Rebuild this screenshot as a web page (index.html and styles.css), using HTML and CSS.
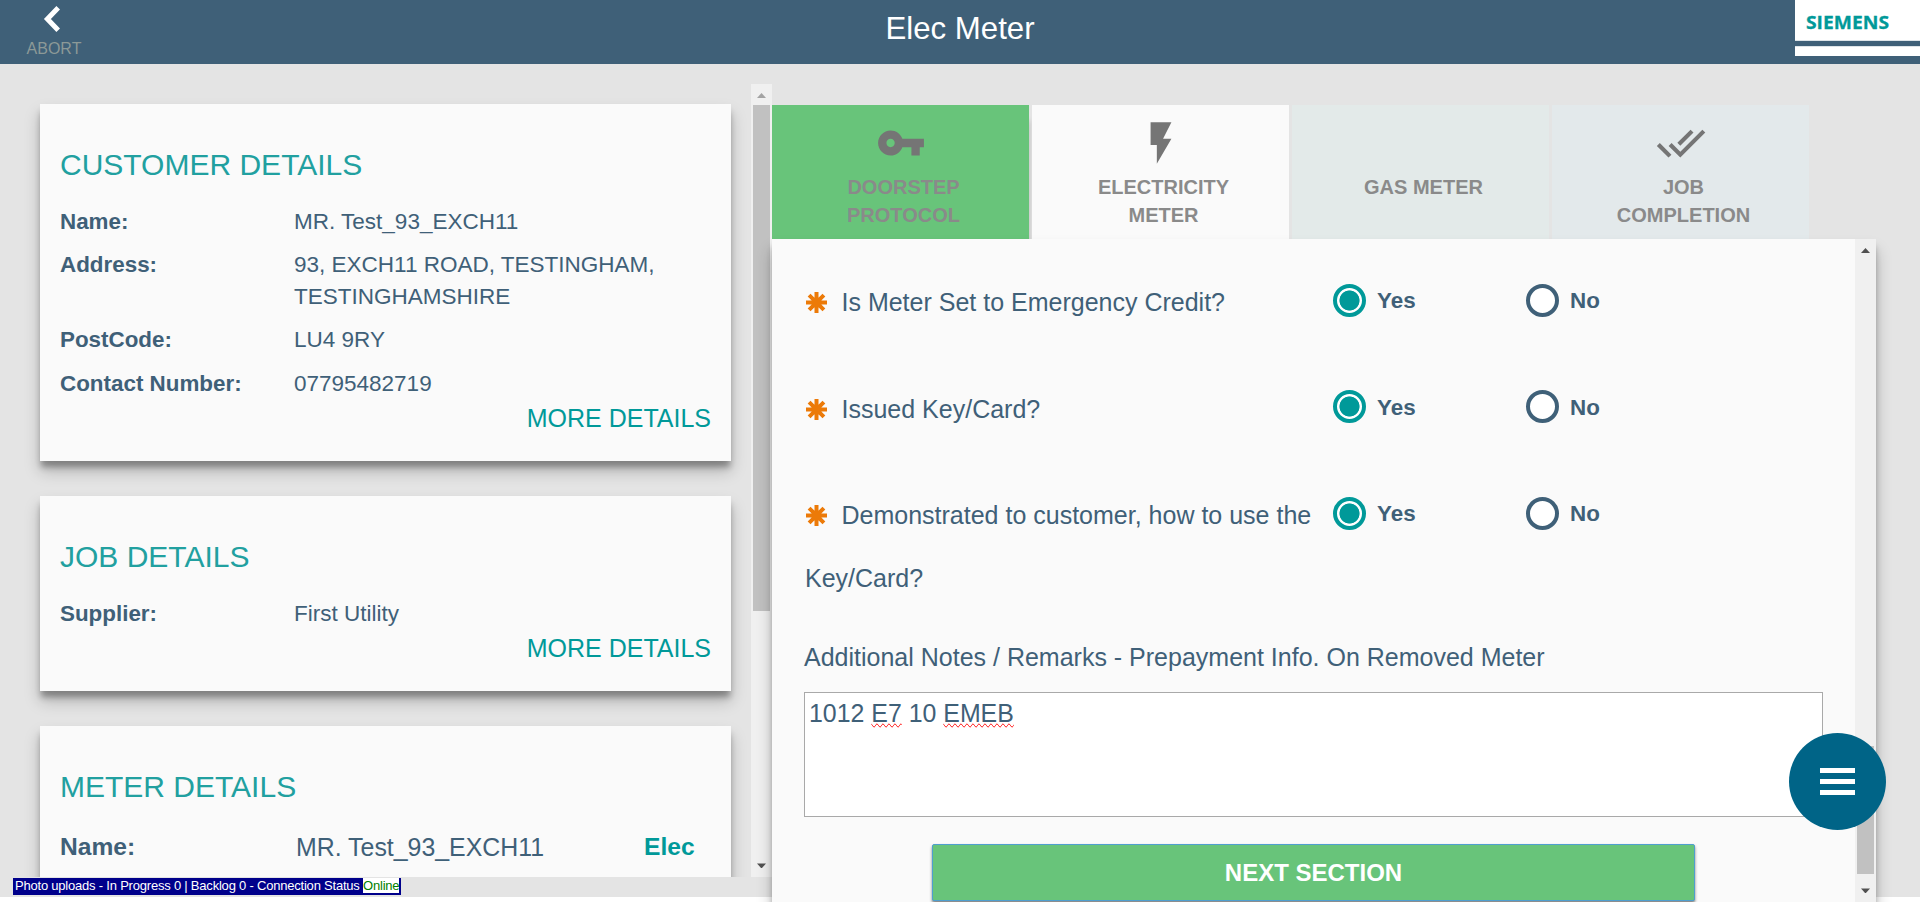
FILE: index.html
```html
<!DOCTYPE html>
<html lang="en">
<head>
<meta charset="utf-8">
<title>Elec Meter</title>
<link rel="stylesheet" href="styles.css">
</head>
<body>
<header class="topbar">
  <div class="abort">
    <svg class="abort-icon" viewBox="0 0 18 28" width="18" height="28"><path d="M15.2 2.8 4.4 14l10.8 11.2" fill="none" stroke="#fff" stroke-width="5"/></svg>
    <span class="abort-label">ABORT</span>
  </div>
  <h1 class="page-title">Elec Meter</h1>
  <div class="brand">
    <svg class="brand-name" width="113" height="41"><text x="0" y="29" textLength="83" lengthAdjust="spacingAndGlyphs">SIEMENS</text></svg>
    <div class="brand-line"></div>
  </div>
</header>

<main class="content">
  <section class="sidebar">
    <div class="cards">
      <article class="card card-customer">
        <h2 class="card-title">CUSTOMER DETAILS</h2>
        <dl class="details">
          <dt>Name:</dt><dd>MR. Test_93_EXCH11</dd>
          <dt>Address:</dt><dd>93, EXCH11 ROAD, TESTINGHAM, TESTINGHAMSHIRE</dd>
          <dt>PostCode:</dt><dd>LU4 9RY</dd>
          <dt>Contact Number:</dt><dd>07795482719</dd>
        </dl>
        <a class="more">MORE DETAILS</a>
      </article>
      <article class="card card-job">
        <h2 class="card-title">JOB DETAILS</h2>
        <dl class="details">
          <dt>Supplier:</dt><dd>First Utility</dd>
        </dl>
        <a class="more">MORE DETAILS</a>
      </article>
      <article class="card card-meter">
        <h2 class="card-title">METER DETAILS</h2>
        <div class="meter-row"><b>Name:</b><span>MR. Test_93_EXCH11</span><b class="fuel">Elec</b></div>
      </article>
    </div>
    <div class="scrollbar scrollbar-left">
      <div class="arrow arrow-up arrow-dim"></div>
      <div class="thumb"></div>
      <div class="arrow arrow-down"></div>
    </div>
  </section>

  <section class="work">
    <nav class="tabs">
      <div class="tab tab-done">
        <svg class="tab-icon" viewBox="0 0 24 24"><path d="M12.65 10C11.83 7.67 9.61 6 7 6c-3.31 0-6 2.69-6 6s2.69 6 6 6c2.61 0 4.83-1.67 5.65-4H17v4h4v-4h2v-4H12.65zM7 14c-1.1 0-2-.9-2-2s.9-2 2-2 2 .9 2 2-.9 2-2 2z"/></svg>
        <span>DOORSTEP<br>PROTOCOL</span>
      </div>
      <div class="tab tab-current">
        <svg class="tab-icon" viewBox="0 0 24 24"><path d="M7 2v11h3v9l7-12h-4l4-8z"/></svg>
        <span>ELECTRICITY<br>METER</span>
      </div>
      <div class="tab tab-gas">
        <div class="tab-icon"></div>
        <span>GAS METER</span>
      </div>
      <div class="tab tab-job">
        <svg class="tab-icon" viewBox="0 0 24 24"><path d="M18 7l-1.41-1.41-6.34 6.34 1.41 1.41L18 7zm4.24-1.41L11.66 16.17 7.48 12l-1.41 1.41L11.66 19l12-12-1.42-1.41zM.41 13.41L6 19l1.41-1.41L1.83 12 .41 13.41z"/></svg>
        <span>JOB<br>COMPLETION</span>
      </div>
    </nav>
    <div class="panel">
      <form class="form">
        <div class="question">
          <div class="question-text"><svg class="required" viewBox="-10.5 -10.5 21 21"><path d="M0-10.5v21M-10.5 0h21M-7.4-7.4 7.4 7.4M-7.4 7.4 7.4-7.4"/></svg>Is Meter Set to Emergency Credit?</div>
          <label class="option"><i class="radio radio-on"></i>Yes</label>
          <label class="option"><i class="radio"></i>No</label>
        </div>
        <div class="question">
          <div class="question-text"><svg class="required" viewBox="-10.5 -10.5 21 21"><path d="M0-10.5v21M-10.5 0h21M-7.4-7.4 7.4 7.4M-7.4 7.4 7.4-7.4"/></svg>Issued Key/Card?</div>
          <label class="option"><i class="radio radio-on"></i>Yes</label>
          <label class="option"><i class="radio"></i>No</label>
        </div>
        <div class="question question-long">
          <div class="question-text"><svg class="required" viewBox="-10.5 -10.5 21 21"><path d="M0-10.5v21M-10.5 0h21M-7.4-7.4 7.4 7.4M-7.4 7.4 7.4-7.4"/></svg>Demonstrated to customer, how to use the Key/Card?</div>
          <label class="option"><i class="radio radio-on"></i>Yes</label>
          <label class="option"><i class="radio"></i>No</label>
        </div>
        <div class="notes-label">Additional Notes / Remarks - Prepayment Info. On Removed Meter</div>
        <div class="notes">1012 <span class="misspelt">E7</span> 10 <span class="misspelt">EMEB</span></div>
        <div class="next">NEXT SECTION</div>
      </form>
      <div class="scrollbar scrollbar-right">
        <div class="arrow arrow-up"></div>
        <div class="thumb"></div>
        <div class="arrow arrow-down"></div>
      </div>
    </div>
  </section>
</main>

<div class="status">Photo uploads - In Progress 0 | Backlog 0 - Connection Status <span class="online">Online</span></div>
<div class="fab"><i></i><i></i><i></i></div>
</body>
</html>
```

FILE: styles.css
```css
* { box-sizing: border-box; }
html, body { height: 902px; overflow: hidden; }
body {
  margin: 0;
  background: #fff;
  color: #3f6078;
  font-family: "Liberation Sans", Arial, sans-serif;
  position: relative;
}
h1, h2, dl, dd { margin: 0; font-weight: normal; }

.topbar {
  height: 64px;
  background: #3f6078;
  display: grid;
  grid-template-columns: 125px 1fr 125px;
  align-items: start;
}
.abort { width: 108px; padding-top: 5px; display: flex; flex-direction: column; align-items: center; }
.abort-icon { margin-right: 4px; }
.abort-label { font-size: 16px; line-height: 20px; color: #8c9997; margin-top: 6px; }
.page-title { color: #fff; font-size: 31.2px; line-height: 58px; text-align: center; }
.brand { height: 56px; background: #fff; }
.brand-name { display: block; margin-left: 11px; }
.brand-name text { font: 700 18px "Open Sans", "Noto Sans", sans-serif; fill: #009999; stroke: #009999; stroke-width: .3px; }
.brand-line { height: 5px; background: #3f6078; box-shadow: 0 0 1px #3f6078; }

.content { height: 833px; background: #e4e4e4; display: flex; align-items: flex-start; }

.sidebar { width: 772px; height: 793px; margin-top: 20px; display: flex; }
.cards { flex: 1; height: 813px; margin-top: -20px; padding: 40px 20px 0 40px; overflow: hidden; display: flex; flex-direction: column; gap: 35px; }
.card {
  flex: none;
  background: #fafafa;
  padding: 40px 20px 0;
  box-shadow: 0 7px 6px -1px rgba(0,0,0,.3), 0 10px 15px rgba(0,0,0,.22);
}
.card-customer { height: 357px; }
.card-job { height: 195px; }
.card-meter { height: 300px; }
.card-title { font-size: 30px; line-height: 42px; color: #21a0a0; }
.details { display: grid; grid-template-columns: 234px 1fr; row-gap: 11.2px; font-size: 22.4px; line-height: 32px; margin-top: 20px; }
.details dt { font-weight: bold; }
.details dd { font-size: 22.5px; }
.more { display: block; text-align: right; color: #009999; font-size: 25px; line-height: 32px; margin-top: 2.4px; }
.meter-row { display: grid; grid-template-columns: 236px 348px 1fr; font-size: 24.6px; line-height: 32px; margin-top: 22.5px; }
.meter-row span { font-size: 24.9px; }
.fuel { color: #009999; }

.scrollbar { width: 21px; background: #f0f0f0; display: flex; flex-direction: column; align-items: center; }
.scrollbar .thumb { width: 17px; background: #c1c1c1; }
.arrow { width: 21px; height: 21px; display: flex; align-items: center; justify-content: center; }
.arrow::before { content: ""; width: 9px; height: 5px; background: #505050; clip-path: polygon(50% 0, 100% 100%, 0 100%); }
.arrow-dim::before { background: #a3a3a3; }
.arrow-up { padding-top: 2px; }
.arrow-down { margin-top: auto; transform: scaleY(-1); padding-top: 1px; }
.scrollbar-left .thumb { height: 506px; }

.work { width: 1104px; margin-top: 41px; }
.tabs { display: flex; gap: 3px; height: 134px; }
.tab {
  width: 257px;
  padding-top: 13px;
  display: flex;
  flex-direction: column;
  align-items: center;
  font-size: 20px;
  line-height: 28px;
  font-weight: bold;
  color: #8a8a8a;
  text-align: center;
}
.tab span { margin-top: 5px; padding-left: 6px; }
.tab-icon { width: 50px; height: 50px; fill: #757575; }
.tab-done { background: #68c47a; box-shadow: 0 16px 6px rgba(0,0,0,.2); clip-path: inset(0 -3px 0 0); }
.tab-current { background: #fafafa; }
.tab-gas { background: #e3eae9; }
.tab-job { background: #e3e9eb; }

.panel {
  position: relative;
  height: 663px;
  background: #fafafa;
  display: flex;
  box-shadow: 0 7px 6px -1px rgba(0,0,0,.3), 0 12px 15px rgba(0,0,0,.24);
}
.form { width: 1083px; padding: 32px 0 0 33px; }
.question { display: flex; height: 106.5px; }
.question-long { height: 155px; }
.question-text { width: 528px; font-size: 25px; line-height: 62.5px; }
.required { width: 21px; height: 21px; margin: 0 14.5px 0 1px; vertical-align: -2px; }
.required path { stroke: #ec7a08; stroke-width: 4; }
.option { width: 193px; height: 60px; display: flex; align-items: center; gap: 11px; font-size: 22.4px; font-weight: bold; }
.radio { width: 33px; height: 33px; border: 4px solid #3f6078; border-radius: 50%; background: #fff; margin-top: -2px; }
.radio-on { border-color: #009999; background: radial-gradient(circle, #009999 9.7px, #fff 10.4px); }
.notes-label { font-size: 25px; line-height: 36px; margin-left: -1px; }
.notes {
  width: 1019px;
  height: 125px;
  margin: 17px 0 0 -1px;
  padding: 4px 4px;
  border: 1px solid #a9a9a9;
  background: #fff;
  font-size: 24.9px;
  line-height: 32px;
}
.misspelt { text-decoration: underline wavy #f00 1px; text-decoration: spelling-error; }
.next {
  width: 763px;
  height: 57px;
  margin: 27px 0 0 127px;
  border: 1px solid #4f9fcf;
  border-radius: 2px;
  background: #68c47a;
  box-shadow: 0 2px 3px rgba(0,0,0,.5);
  color: #fff;
  font-size: 24px;
  font-weight: bold;
  line-height: 56px;
  text-align: center;
}
.scrollbar-right .thumb { height: 128px; margin-top: 486px; }

.status {
  position: absolute;
  left: 13px;
  top: 878px;
  width: 388px;
  height: 17px;
  padding-left: 2px;
  background: #00008b;
  color: #fff;
  font-size: 13px;
  letter-spacing: -.21px;
  line-height: 15px;
  white-space: nowrap;
}
.online { background: #fff; color: #008000; }

.fab {
  position: absolute;
  left: 1788.5px;
  top: 732.5px;
  width: 97px;
  height: 97px;
  border-radius: 50%;
  background: #006487;
  display: flex;
  flex-direction: column;
  align-items: center;
  justify-content: center;
  gap: 6px;
}
.fab i { width: 35px; height: 5px; background: #fff; }
```
